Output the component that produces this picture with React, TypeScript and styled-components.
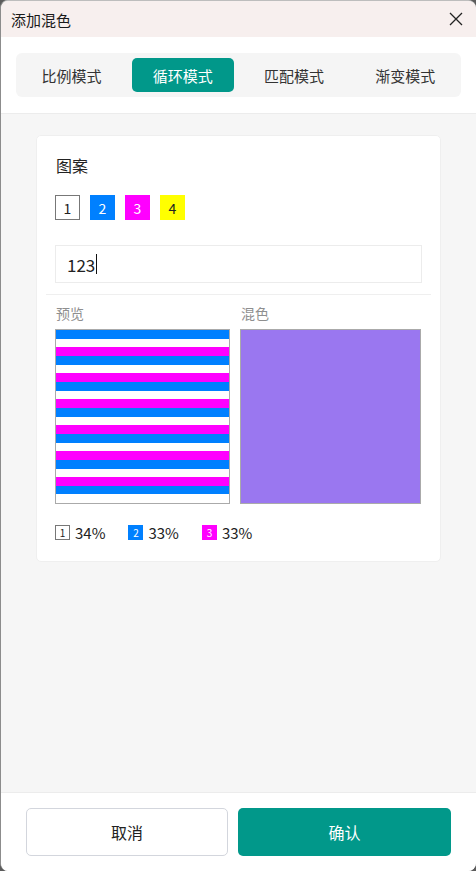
import React from "react";
import styled, { createGlobalStyle } from "styled-components";

const Global = createGlobalStyle`
  html, body { margin: 0; padding: 0; background: #5c5c5c; }
  body { font-family: "Noto Sans CJK SC", "Noto Sans", sans-serif; color: #222; }
  * { box-sizing: border-box; }
`;

const Window = styled.div`
  width: 476px;
  height: 871px;
  display: flex;
  flex-direction: column;
  background: #f6f6f6;
  border-left: 1px solid #8c8c8c;
  border-top: 1px solid #bdbdbd;
  border-radius: 8px 8px 8px 8px;
  overflow: hidden;
`;

const TitleBar = styled.div`
  height: 36px;
  flex: none;
  display: flex;
  align-items: center;
  justify-content: space-between;
  padding: 0 12px 0 10px;
  background: #f7efee;
  font-size: 15px;
  color: #1a1a1a;
`;

const CloseBtn = styled.div`
  width: 16px;
  height: 16px;
  display: flex;
  align-items: center;
  justify-content: center;
`;

const TabsArea = styled.div`
  flex: none;
  background: #fff;
  padding: 16px 15px 16px 15px;
  border-bottom: 1px solid #ececec;
`;

const Tabs = styled.div`
  display: grid;
  grid-template-columns: repeat(4, 1fr);
  gap: 10px;
  padding: 5px;
  background: #f5f5f5;
  border-radius: 6px;
`;

const Tab = styled.div<{ $active?: boolean }>`
  height: 34px;
  display: flex;
  align-items: center;
  justify-content: center;
  font-size: 15px;
  border-radius: 5px;
  color: ${(p) => (p.$active ? "#fff" : "#333")};
  background: ${(p) => (p.$active ? "#01988a" : "transparent")};
`;

const Body = styled.div`
  flex: 1;
  padding: 21px 35px 0 35px;
`;

const Card = styled.div`
  background: #fff;
  border-radius: 5px;
  border: 1px solid #efefef;
  padding: 16px 18px 18px 18px;
  display: flex;
  flex-direction: column;
`;

const SectionTitle = styled.div`
  font-size: 16px;
  line-height: 26px;
  color: #222;
  padding-left: 1px;
`;

const SwatchRow = styled.div`
  display: flex;
  gap: 10px;
  margin-top: 17px;
`;

const Swatch = styled.div<{ $bg: string; $fg: string; $border?: boolean }>`
  width: 25px;
  height: 25px;
  display: flex;
  align-items: center;
  justify-content: center;
  font-size: 14px;
  background: ${(p) => p.$bg};
  color: ${(p) => p.$fg};
  border: ${(p) => (p.$border ? "1px solid #777" : "none")};
`;

const Input = styled.div`
  margin-top: 25px;
  height: 38px;
  border: 1px solid #ececec;
  display: flex;
  align-items: center;
  padding-left: 11px;
  font-size: 17px;
  color: #222;
`;

const Caret = styled.span`
  display: inline-block;
  width: 1px;
  height: 20px;
  background: #111;
  margin-left: 1px;
`;

const Divider = styled.div`
  height: 1px;
  background: #efefef;
  margin: 11px -9px 0 -9px;
`;

const PreviewGrid = styled.div`
  display: grid;
  grid-template-columns: 175px 181px;
  gap: 10px;
  margin-top: 6px;
`;

const Label = styled.div`
  font-size: 14px;
  line-height: 24px;
  color: #8f8f8f;
  margin-bottom: 4px;
  padding-left: 1px;
`;

const StripeBox = styled.div`
  width: 175px;
  height: 175px;
  border: 1px solid #aaa;
  display: flex;
  flex-direction: column;
  overflow: hidden;
`;

const Stripe = styled.div<{ $c: string }>`
  flex: 1;
  background: ${(p) => p.$c};
`;

const MixBox = styled.div`
  width: 181px;
  height: 175px;
  border: 1px solid #aaa;
  background: #9a77f0;
`;

const Legend = styled.div`
  display: flex;
  gap: 23px;
  margin-top: 18px;
`;

const LegendItem = styled.div`
  display: flex;
  align-items: center;
  gap: 5px;
  font-size: 15px;
  color: #222;
`;

const MiniSwatch = styled.div<{ $bg: string; $fg: string; $border?: boolean }>`
  width: 15px;
  height: 15px;
  display: flex;
  align-items: center;
  justify-content: center;
  font-size: 10px;
  background: ${(p) => p.$bg};
  color: ${(p) => p.$fg};
  border: ${(p) => (p.$border ? "1px solid #777" : "none")};
`;

const Footer = styled.div`
  flex: none;
  height: 79px;
  background: #fff;
  border-top: 1px solid #ececec;
  display: grid;
  grid-template-columns: 202px 213px;
  gap: 10px;
  padding: 15px 0 0 25px;
`;

const Button = styled.div<{ $primary?: boolean }>`
  height: 48px;
  border-radius: 5px;
  display: flex;
  align-items: center;
  justify-content: center;
  font-size: 16px;
  color: ${(p) => (p.$primary ? "#fff" : "#222")};
  background: ${(p) => (p.$primary ? "#01988a" : "#fff")};
  border: ${(p) => (p.$primary ? "none" : "1px solid #d3d6dd")};
`;

const colors: Record<string, { bg: string; fg: string; border?: boolean }> = {
  "1": { bg: "#fff", fg: "#222", border: true },
  "2": { bg: "#0080ff", fg: "#fff" },
  "3": { bg: "#ff00ff", fg: "#fff" },
  "4": { bg: "#ffff00", fg: "#222" },
};

const stripeOrder = ["2", "1", "3"];
const stripes = Array.from({ length: 20 }, (_, i) => colors[stripeOrder[i % 3]].bg);

const legend = [
  { k: "1", v: "34%" },
  { k: "2", v: "33%" },
  { k: "3", v: "33%" },
];

export default function App() {
  return (
    <>
      <Global />
      <Window>
        <TitleBar>
          <span>添加混色</span>
          <CloseBtn>
            <svg width="14" height="14" viewBox="0 0 14 14">
              <path d="M1 1L13 13M13 1L1 13" stroke="#222" strokeWidth="1.3" fill="none" />
            </svg>
          </CloseBtn>
        </TitleBar>
        <TabsArea>
          <Tabs>
            <Tab>比例模式</Tab>
            <Tab $active>循环模式</Tab>
            <Tab>匹配模式</Tab>
            <Tab>渐变模式</Tab>
          </Tabs>
        </TabsArea>
        <Body>
          <Card>
            <SectionTitle>图案</SectionTitle>
            <SwatchRow>
              {["1", "2", "3", "4"].map((k) => (
                <Swatch key={k} $bg={colors[k].bg} $fg={colors[k].fg} $border={colors[k].border}>
                  {k}
                </Swatch>
              ))}
            </SwatchRow>
            <Input>
              123
              <Caret />
            </Input>
            <Divider />
            <PreviewGrid>
              <div>
                <Label>预览</Label>
                <StripeBox>
                  {stripes.map((c, i) => (
                    <Stripe key={i} $c={c} />
                  ))}
                </StripeBox>
              </div>
              <div>
                <Label>混色</Label>
                <MixBox />
              </div>
            </PreviewGrid>
            <Legend>
              {legend.map((l) => (
                <LegendItem key={l.k}>
                  <MiniSwatch $bg={colors[l.k].bg} $fg={colors[l.k].fg} $border={colors[l.k].border}>
                    {l.k}
                  </MiniSwatch>
                  {l.v}
                </LegendItem>
              ))}
            </Legend>
          </Card>
        </Body>
        <Footer>
          <Button>取消</Button>
          <Button $primary>确认</Button>
        </Footer>
      </Window>
    </>
  );
}
